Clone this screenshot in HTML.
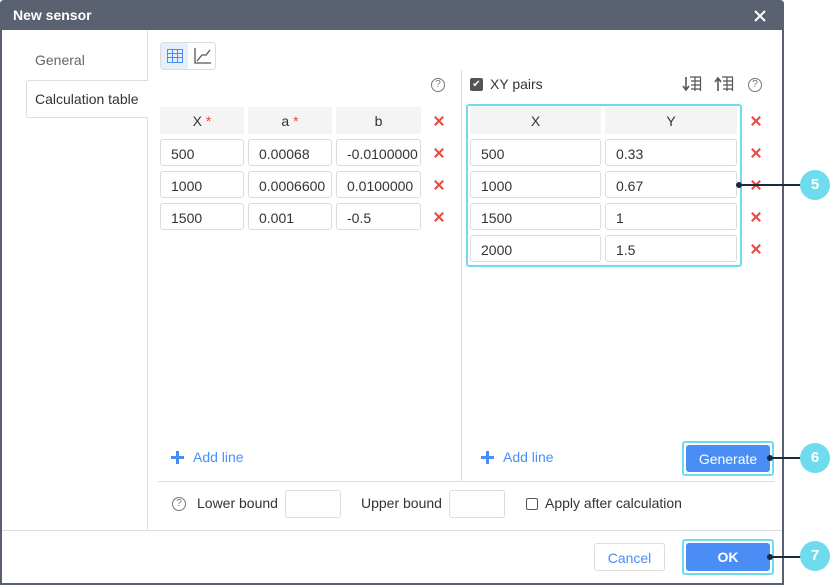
<!DOCTYPE html><html><head><style>
*{box-sizing:border-box;margin:0;padding:0}
body{width:833px;height:585px;background:#fff;font-family:"Liberation Sans",sans-serif;font-size:14px;color:#333;position:relative;overflow:hidden}
.a{position:absolute}
.dlg{left:0;top:0;width:784px;height:585px;border:2px solid #586070;border-top:none;border-radius:4px 4px 0 0;background:#fff}
.hdr{left:0;top:0;width:784px;height:30px;background:#5a6170;color:#fff;font-weight:bold;font-size:14px;padding:7px 0 0 13px;border-radius:4px 4px 0 0}
.cell{position:absolute;border:1px solid #dcdcdc;border-radius:3px;height:27px;padding:6px 0 0 10px;font-size:14px;color:#333;white-space:nowrap;overflow:hidden;background:#fff}
.th{position:absolute;background:#f4f4f4;height:27px;text-align:center;padding-top:6px;font-size:14px;color:#333}
.x{position:absolute;width:10px;height:10px}
.x:before,.x:after{content:"";position:absolute;left:-1px;top:4px;width:12px;height:2px;background:#f0463c;transform:rotate(45deg)}
.x:after{transform:rotate(-45deg)}
.req{color:#f0463c}
.help{position:absolute;width:14px;height:14px;border:1px solid #777;border-radius:50%;font-size:10px;text-align:center;line-height:12px;color:#777}
.circ{position:absolute;width:30px;height:30px;border-radius:50%;background:#6fdcee;color:#fff;font-weight:bold;font-size:15px;text-align:center;line-height:30px}
.ln{position:absolute;height:2px;background:#1c2a40}
.dot{position:absolute;width:6px;height:6px;border-radius:50%;background:#1c2a40}
.btn{position:absolute;background:#4a8ef5;color:#fff;border-radius:3px;text-align:center;font-size:14px}
.ring{position:absolute;border:2px solid #6fdcee;border-radius:3px}
.blue{color:#4a8ef5}
.plus{position:absolute;width:13px;height:13px}
.plus:before{content:"";position:absolute;left:0;top:5px;width:13px;height:3px;background:#4a8ef5}
.plus:after{content:"";position:absolute;left:5px;top:0;width:3px;height:13px;background:#4a8ef5}
</style></head><body>
<div class="a dlg"></div>
<div class="a hdr">New sensor</div>
<svg class="a" style="left:754px;top:10px" width="12" height="12"><path d="M1 1L11 11M11 1L1 11" stroke="#fff" stroke-width="2"/></svg>
<div class="a" style="left:147px;top:30px;width:1px;height:500px;background:#ddd"></div>
<div class="a" style="left:35px;top:52px;color:#666">General</div>
<div class="a" style="left:26px;top:80px;width:122px;height:38px;border:1px solid #ddd;border-right:none;background:#fff;border-radius:3px 0 0 3px;padding:10px 0 0 8px;white-space:nowrap">Calculation table</div>
<div class="a" style="left:160px;top:42px;width:56px;height:28px;border:1px solid #ddd;border-radius:4px;overflow:hidden">
 <div class="a" style="left:0;top:0;width:27px;height:26px;background:#e6effc"></div>
 <svg class="a" style="left:6px;top:6px" width="16" height="14"><rect x="0.5" y="0.5" width="15" height="13" fill="none" stroke="#4a8ef5"/><path d="M0 4.5H16M0 8.5H16M5.5 0V14M10.5 0V14" stroke="#4a8ef5"/></svg>
 <svg class="a" style="left:33px;top:5px" width="17" height="16"><path d="M1 0V15H17M3 13L8 7H12L16 2" fill="none" stroke="#555" stroke-width="1.3"/></svg>
</div>
<div class="help" style="left:431px;top:78px">?</div>
<div class="th" style="left:160px;top:107px;width:84px">X <span class="req">*</span></div>
<div class="th" style="left:248px;top:107px;width:84px">a <span class="req">*</span></div>
<div class="th" style="left:336px;top:107px;width:85px">b</div>
<div class="x" style="left:434px;top:116px"></div>
<div class="cell" style="left:160px;top:139px;width:84px">500</div>
<div class="cell" style="left:248px;top:139px;width:84px">0.00068</div>
<div class="cell" style="left:336px;top:139px;width:85px">-0.0100000</div>
<div class="x" style="left:434px;top:148px"></div>
<div class="cell" style="left:160px;top:171px;width:84px">1000</div>
<div class="cell" style="left:248px;top:171px;width:84px">0.0006600</div>
<div class="cell" style="left:336px;top:171px;width:85px">0.0100000</div>
<div class="x" style="left:434px;top:180px"></div>
<div class="cell" style="left:160px;top:203px;width:84px">1500</div>
<div class="cell" style="left:248px;top:203px;width:84px">0.001</div>
<div class="cell" style="left:336px;top:203px;width:85px">-0.5</div>
<div class="x" style="left:434px;top:212px"></div>
<div class="a" style="left:461px;top:70px;width:1px;height:411px;background:#ddd"></div>
<div class="a" style="left:470px;top:78px;width:13px;height:13px;background:#555;border-radius:2px;color:#fff;font-size:10px;text-align:center;line-height:13px">✔</div>
<div class="a" style="left:490px;top:76px">XY pairs</div>
<svg class="a" style="left:682px;top:76px" width="20" height="16"><path d="M4 1V14M1 10L4 14L7 10" fill="none" stroke="#555" stroke-width="1.6"/><path d="M8 1H19M9 5H19M9 9H19M9 13H19M13 1V15M18.5 1V15" stroke="#555" stroke-width="1.2" fill="none"/></svg>
<svg class="a" style="left:714px;top:76px" width="20" height="16"><path d="M4 15V2M1 6L4 2L7 6" fill="none" stroke="#555" stroke-width="1.6"/><path d="M8 1H19M9 5H19M9 9H19M9 13H19M13 1V15M18.5 1V15" stroke="#555" stroke-width="1.2" fill="none"/></svg>
<div class="help" style="left:748px;top:78px">?</div>
<div class="ring" style="left:466px;top:104px;width:276px;height:163px"></div>
<div class="th" style="left:470px;top:107px;width:131px">X</div>
<div class="th" style="left:605px;top:107px;width:132px">Y</div>
<div class="cell" style="left:470px;top:139px;width:131px">500</div><div class="cell" style="left:605px;top:139px;width:132px">0.33</div>
<div class="cell" style="left:470px;top:171px;width:131px">1000</div><div class="cell" style="left:605px;top:171px;width:132px">0.67</div>
<div class="cell" style="left:470px;top:203px;width:131px">1500</div><div class="cell" style="left:605px;top:203px;width:132px">1</div>
<div class="cell" style="left:470px;top:235px;width:131px">2000</div><div class="cell" style="left:605px;top:235px;width:132px">1.5</div>
<div class="x" style="left:751px;top:116px"></div><div class="x" style="left:751px;top:148px"></div><div class="x" style="left:751px;top:180px"></div><div class="x" style="left:751px;top:212px"></div><div class="x" style="left:751px;top:244px"></div>
<div class="ln" style="left:739px;top:184px;width:62px"></div><div class="dot" style="left:736px;top:182px"></div>
<div class="circ" style="left:800px;top:170px">5</div>
<div class="plus" style="left:171px;top:451px"></div>
<div class="a blue" style="left:193px;top:449px">Add line</div>
<div class="plus" style="left:481px;top:451px"></div>
<div class="a blue" style="left:503px;top:449px">Add line</div>
<div class="ring" style="left:682px;top:441px;width:92px;height:35px"></div>
<div class="btn" style="left:686px;top:445px;width:84px;height:27px;padding-top:6px">Generate</div>
<div class="ln" style="left:770px;top:457px;width:31px"></div><div class="dot" style="left:767px;top:455px"></div>
<div class="circ" style="left:800px;top:443px">6</div>
<div class="a" style="left:158px;top:481px;width:617px;height:1px;background:#ddd"></div>
<div class="help" style="left:172px;top:497px">?</div>
<div class="a" style="left:197px;top:495px">Lower bound</div>
<div class="a" style="left:285px;top:490px;width:56px;height:28px;border:1px solid #ddd;border-radius:3px"></div>
<div class="a" style="left:361px;top:495px">Upper bound</div>
<div class="a" style="left:449px;top:490px;width:56px;height:28px;border:1px solid #ddd;border-radius:3px"></div>
<div class="a" style="left:526px;top:498px;width:12px;height:12px;border:1px solid #555;border-radius:2px"></div>
<div class="a" style="left:545px;top:495px">Apply after calculation</div>
<div class="a" style="left:2px;top:530px;width:780px;height:1px;background:#ddd"></div>
<div class="a blue" style="left:594px;top:543px;width:71px;height:28px;border:1px solid #ddd;border-radius:3px;text-align:center;padding-top:6px">Cancel</div>
<div class="ring" style="left:682px;top:539px;width:92px;height:36px"></div>
<div class="btn" style="left:686px;top:543px;width:84px;height:28px;padding-top:6px;font-weight:bold">OK</div>
<div class="ln" style="left:770px;top:556px;width:31px"></div><div class="dot" style="left:767px;top:554px"></div>
<div class="circ" style="left:800px;top:541px">7</div>
</body></html>
